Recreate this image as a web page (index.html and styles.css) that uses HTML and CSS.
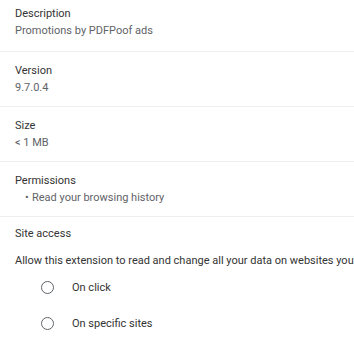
FILE: index.html
```html
<!DOCTYPE html>
<html lang="en">
<head>
    <meta charset="UTF-8">
    <title>Extension details</title>
    <link rel="stylesheet" href="styles.css">
</head>
<body>
    <div class="details">
        <div class="row first">
            <div class="label">Description</div>
            <div class="value">Promotions by PDFPoof ads</div>
        </div>
        <div class="row">
            <div class="label">Version</div>
            <div class="value">9.7.0.4</div>
        </div>
        <div class="row">
            <div class="label">Size</div>
            <div class="value">&lt; 1 MB</div>
        </div>
        <div class="row">
            <div class="label">Permissions</div>
            <ul class="perm-list">
                <li>Read your browsing history</li>
            </ul>
        </div>
        <div class="row site-access">
            <div class="label">Site access</div>
            <div class="access-text">Allow this extension to read and change all your data on websites you visit:</div>
            <div class="radio-group">
                <div class="radio-row">
                    <span class="radio"></span>
                    <span class="radio-label">On click</span>
                </div>
                <div class="radio-row">
                    <span class="radio"></span>
                    <span class="radio-label">On specific sites</span>
                </div>
            </div>
        </div>
    </div>
</body>
</html>
```

FILE: styles.css
```css
* {
    box-sizing: border-box;
    margin: 0;
    padding: 0;
}

body {
    font-family: Roboto, "Noto Sans", Arial, sans-serif;
    font-size: 11px;
    line-height: 17px;
    color: #333;
    background-color: #fff;
    overflow: hidden;
    white-space: nowrap;
}

.row {
    padding: 10px 15px 11px;
    border-top: 1px solid #efefef;
    height: 55px;
}

.row.first {
    border-top: none;
    padding-top: 5px;
    height: 51px;
}

.label {
    color: #333;
}

.value {
    color: #5f6368;
}

.perm-list {
    list-style: none;
    color: #5f6368;
}

.perm-list li {
    padding-left: 17px;
    position: relative;
}

.perm-list li::before {
    content: "\2022";
    position: absolute;
    left: 10px;
    top: 0;
    color: #5f6368;
}

.row.site-access {
    height: auto;
    padding-top: 8px;
}

.access-text {
    margin-top: 10px;
    color: #333;
}

.radio-group {
    padding-left: 26px;
}

.radio-row {
    display: flex;
    align-items: center;
    height: 36px;
}

.radio {
    width: 13px;
    height: 13px;
    border: 1.7px solid #5f6368;
    border-radius: 50%;
    margin-right: 18px;
}

.radio-label {
    color: #333;
}
```
